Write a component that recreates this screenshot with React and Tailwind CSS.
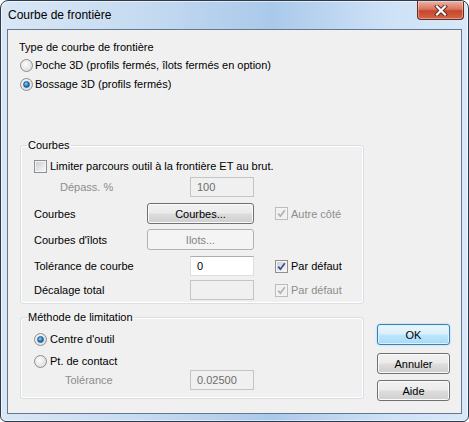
import React from "react";

function CheckBox({ checked, disabled }) {
  return (
    <span
      className={`flex h-[13px] w-[13px] shrink-0 items-center justify-center border p-[1px] ${
        disabled ? "border-[#bcbcbc] bg-[#f4f4f4]" : "border-[#8e8f8f] bg-[#f4f4f4]"
      }`}
    >
      <span
        className={`relative flex h-full w-full items-center justify-center ${
          disabled
            ? "bg-[#f0f0f0]"
            : "bg-[linear-gradient(135deg,#cbcfd5,#e4e6e9_55%,#f7f7f7)]"
        }`}
      >
        {checked && (
          <svg width="11" height="11" viewBox="0 0 11 11" className="absolute left-[-1px] top-[-1px]">
            <path
              d="M2.2 5.6 L4.4 8.2 L8.8 2.2"
              fill="none"
              stroke={disabled ? "#b2b2b2" : "#3b4d8a"}
              strokeWidth="1.7"
            />
          </svg>
        )}
      </span>
    </span>
  );
}

function Radio({ checked }) {
  return (
    <span className="flex h-[13px] w-[13px] shrink-0 items-center justify-center rounded-full border border-[#8e8f8f] bg-[radial-gradient(circle_at_40%_40%,#fdfdfd,#e4e4e4_60%,#cfd1d4)]">
      {checked && (
        <span className="h-[7px] w-[7px] rounded-full border border-[#1b5c92] bg-[radial-gradient(circle_at_40%_35%,#9bdcff,#2a86c6_45%,#0e4d82)]" />
      )}
    </span>
  );
}

function Btn({ children, disabled, primary, className = "" }) {
  let look =
    "border-[#707070] bg-[linear-gradient(#f2f2f2,#ebebeb_48%,#dddddd_52%,#cfcfcf)] text-black shadow-[inset_0_0_0_1px_#fbfbfb]";
  if (disabled) look = "border-[#adb2b5] bg-[#f4f4f4] text-[#838383]";
  if (primary)
    look =
      "border-[#3c7fb1] bg-[linear-gradient(#eaf6fd,#d9f0fc_48%,#bee6fd_52%,#a7d9f5)] text-black shadow-[inset_0_0_0_1px_#d8f2ff,0_0_2px_#8fd0f7]";
  return (
    <div className={`flex h-[21px] items-center justify-center rounded-[3px] border text-[11px] ${look} ${className}`}>
      {children}
    </div>
  );
}

function Field({ value, disabled }) {
  return (
    <div
      className={`flex h-[20px] w-[64px] items-center border pl-[6px] text-[11px] ${
        disabled
          ? "border-[#c2c4c6] bg-[#f0f0f0] text-[#6d6d6d]"
          : "border-[#dbdfe6] border-t-[#abadb3] bg-white text-black"
      }`}
    >
      {value}
    </div>
  );
}

function Group({ title, className = "", children }) {
  return (
    <fieldset
      className={`w-[344px] rounded-[3px] border border-[#d5dfe5] shadow-[inset_0_0_0_1px_#ffffff] ${className}`}
    >
      <legend className="ml-[6px] px-[1px] text-[11px] leading-[14px]">{title}</legend>
      {children}
    </fieldset>
  );
}

function Row({ label, muted, indent = "pl-[13px]", children, side, className = "" }) {
  return (
    <div className={`flex h-[20px] items-center ${className}`}>
      <span className={`w-[126px] shrink-0 ${indent} ${muted ? "text-[#8d8d8d]" : ""}`}>{label}</span>
      <div className="flex w-[107px] shrink-0 justify-end">{children}</div>
      {side}
    </div>
  );
}

function Side({ checked, disabled, text }) {
  return (
    <div className="ml-[21px] flex items-center gap-[3px]">
      <CheckBox checked={checked} disabled={disabled} />
      <span className={disabled ? "text-[#8d8d8d]" : ""}>{text}</span>
    </div>
  );
}

export default function App() {
  return (
    <div className="flex h-[422px] w-[469px] flex-col overflow-hidden rounded-t-[8px] rounded-b-[6px] border border-[#2d3b4d] bg-[linear-gradient(90deg,#d9e7f5,#c6dbf1_30%,#aac9ea_58%,#cde1f6_82%,#d8e8f8)] font-['Liberation_Sans',Arial,sans-serif] text-[11px] text-black shadow-[inset_0_0_0_1px_rgba(255,255,255,0.55)]">
      <div className="flex h-[28px] shrink-0 items-start justify-between pl-[7px] pr-[4px]">
        <span className="mt-[6px] text-[12px] leading-[16px]">Courbe de frontière</span>
        <div className="flex h-[19px] w-[47px] items-center justify-center rounded-b-[4px] border border-t-0 border-[#6a2a1e] bg-[linear-gradient(#eab4a6,#d9765f_45%,#c8452a_55%,#d2664a)] shadow-[inset_0_0_0_1px_rgba(255,255,255,0.35)]">
          <svg width="14" height="11" viewBox="0 0 14 11">
            <path d="M3 1.5 L11 9.5 M11 1.5 L3 9.5" stroke="#5a2a20" strokeWidth="4" strokeLinecap="square" />
            <path d="M3 1.5 L11 9.5 M11 1.5 L3 9.5" stroke="#ffffff" strokeWidth="2.2" strokeLinecap="square" />
          </svg>
        </div>
      </div>

      <div className="mx-[6px] mb-[7px] flex flex-1 border border-[#63778e] bg-[#f0f0f0] leading-[14px]">
        <div className="w-[356px] shrink-0 pl-[12px] pt-[10px]">
          <p className="-ml-[1px]">Type de courbe de frontière</p>
          <div className="mt-[4px] flex h-[14px] items-center gap-[2px]">
            <Radio />
            <span>Poche 3D (profils fermés, îlots fermés en option)</span>
          </div>
          <div className="mt-[5px] flex h-[14px] items-center gap-[2px]">
            <Radio checked />
            <span>Bossage 3D (profils fermés)</span>
          </div>

          <Group title="Courbes" className="mt-[47px] pb-[3px]">
            <div className="mt-[7px] flex h-[14px] items-center gap-[3px] pl-[13px]">
              <CheckBox />
              <span>Limiter parcours outil à la frontière ET au brut.</span>
            </div>
            <Row label="Dépass. %" muted indent="pl-[39px]" className="mt-[4px]">
              <Field value="100" disabled />
            </Row>
            <Row label="Courbes" className="mt-[6px] h-[21px]" side={<Side checked disabled text="Autre côté" />}>
              <Btn className="w-[107px]">Courbes...</Btn>
            </Row>
            <Row label="Courbes d'îlots" className="mt-[5px] h-[21px]">
              <Btn disabled className="w-[107px]">Ilots...</Btn>
            </Row>
            <Row label="Tolérance de courbe" className="mt-[6px]" side={<Side checked text="Par défaut" />}>
              <Field value="0" />
            </Row>
            <Row label="Décalage total" className="mt-[4px]" side={<Side checked disabled text="Par défaut" />}>
              <Field value="" disabled />
            </Row>
          </Group>

          <Group title="Méthode de limitation" className="mt-[6px] pb-[8px]">
            <div className="mt-[8px] flex h-[14px] items-center gap-[3px] pl-[13px]">
              <Radio checked />
              <span>Centre d'outil</span>
            </div>
            <div className="mt-[8px] flex h-[14px] items-center gap-[3px] pl-[13px]">
              <Radio />
              <span>Pt. de contact</span>
            </div>
            <Row label="Tolérance" muted indent="pl-[44px]" className="mt-[2px]">
              <Field value="0.02500" disabled />
            </Row>
          </Group>
        </div>

        <div className="ml-[13px] flex flex-col justify-end pb-[12px]">
          <Btn primary className="w-[73px]">OK</Btn>
          <Btn className="mt-[8px] w-[73px]">Annuler</Btn>
          <Btn className="mt-[6px] w-[73px]">Aide</Btn>
        </div>
      </div>
    </div>
  );
}
